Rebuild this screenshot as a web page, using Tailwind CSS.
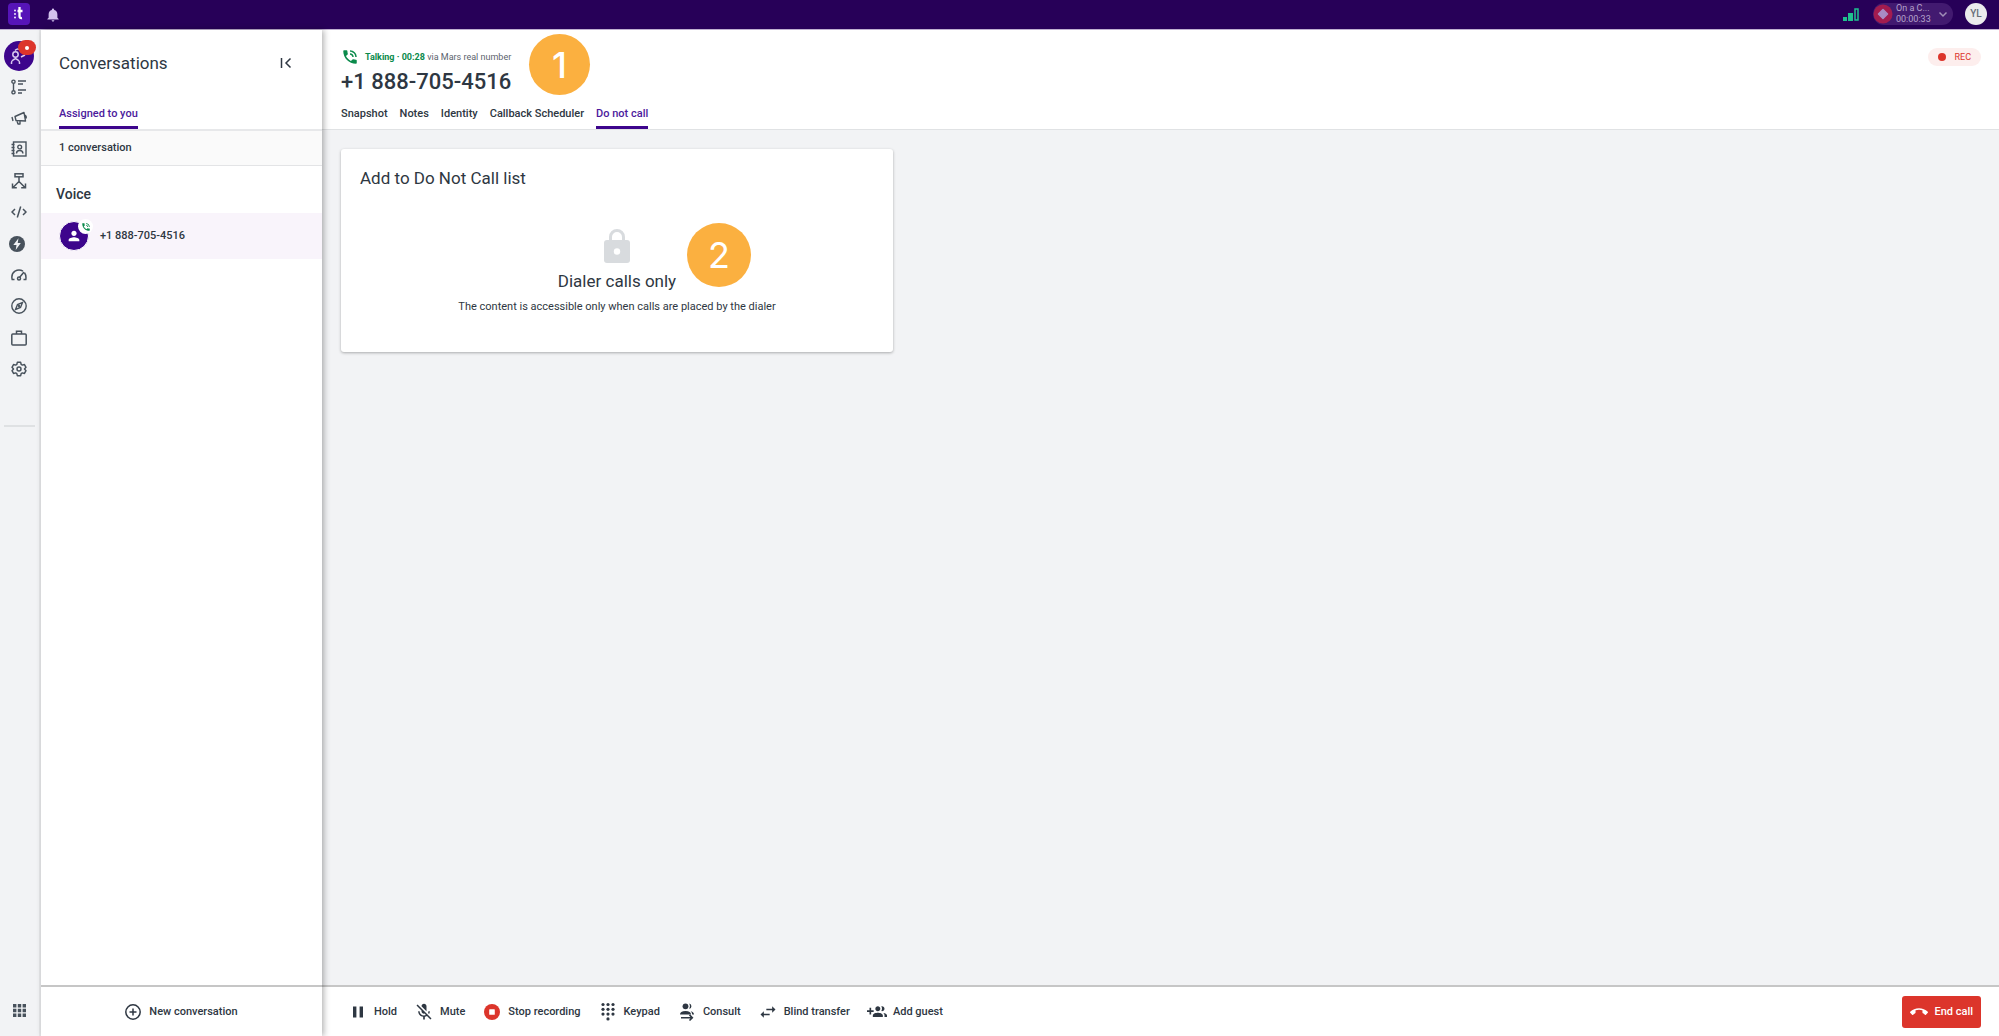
<!DOCTYPE html>
<html lang="en">
<head>
    <meta charset="UTF-8">
    <meta name="viewport" content="width=device-width, initial-scale=1.0">
    <title>Conversations</title>
    <script src="https://cdn.jsdelivr.net/npm/@tailwindcss/browser@4"></script>
</head>
<body class="h-screen flex flex-col overflow-hidden bg-[#f2f3f5] font-[Roboto,sans-serif] text-[11px] leading-4 font-medium text-[#2e3742]">

    <!-- Top bar -->
    <header class="h-[29px] shrink-0 flex items-center justify-between bg-[#270058] pl-2 pr-3">
        <div class="flex items-center gap-4">
            <a href="#" aria-label="Home" class="block size-[22px] mb-0.5">
                <svg viewBox="0 0 22 22" class="size-full">
                    <rect width="22" height="22" rx="4" fill="#5614b8"/>
                    <g fill="#fff"><circle cx="7" cy="7.500" r=".9"/><circle cx="7" cy="11" r=".9"/><circle cx="7" cy="14.500" r=".9"/></g>
                    <path d="M11.500 4v9.300q0 2.200 2.500 1.700M9.500 8h5" fill="none" stroke="#fff" stroke-width="2.300"/>
                </svg>
            </a>
            <button type="button" aria-label="Notifications">
                <svg viewBox="0 0 24 24" class="size-[14px]" fill="#d3c3ec"><path d="M12 23c1.300 0 2.300-1 2.300-2.200H9.700C9.700 22 10.700 23 12 23zm7.500-6.500V11c0-3.700-2-6.700-5.500-7.500V2.800a2 2 0 0 0-4 0v.7C6.500 4.300 4.500 7.300 4.500 11v5.500L2.300 18.700v1h19.400v-1z"/></svg>
            </button>
        </div>
        <div class="flex items-center h-full">
            <svg viewBox="0 0 16 13" class="w-4 h-[13px] mr-[14px]" aria-label="Signal" role="img">
                <path d="M0 9h4v4H0zM5 5h5v8H5z" fill="#1fc08e"/>
                <path d="M12 1h3v11h-3z" fill="none" stroke="#1fc08e" stroke-width="1.500"/>
            </svg>
            <button type="button" class="flex items-center w-20 h-[22px] rounded-full bg-[#421a70] mb-0.5 font-normal text-[#b5a3cc]">
                <svg viewBox="0 0 20 20" class="size-5 shrink-0"><circle cx="10" cy="10" r="9.500" fill="#a31c4f"/><path d="M10 5.500 14.500 10 10 14.500 5.500 10z" fill="#a98bc4" stroke="#a98bc4" stroke-width="1.500" stroke-linejoin="round"/></svg>
                <span class="w-9 ml-[3px] text-left text-[9px] leading-[11px]">On a C...<br>00:00:33</span>
                <svg viewBox="0 0 10 10" class="size-[10px] ml-[6px]" fill="none" stroke="#a08fb8" stroke-width="1.500"><path d="m1.500 3.500 3.500 3.500 3.500-3.500"/></svg>
            </button>
            <button type="button" class="size-[22px] rounded-full bg-[#ebebed] ml-3 mb-0.5 text-[10px] text-[#666e78]">YL</button>
        </div>
    </header>

    <div class="flex flex-1 min-h-0 border-t border-[#bfb0d0]">

        <!-- Navigation rail -->
        <nav class="w-[41px] shrink-0 flex flex-col border-r-2 border-[#e7e8ea] text-[#48525c]">
            <a href="#" aria-label="Conversations" class="relative block size-[30px] mt-[11px] ml-1 rounded-full bg-[#3d058c]">
                <svg viewBox="0 0 30 30" class="size-full" fill="none" stroke="#d9c9ef" stroke-width="1.500"><circle cx="11.500" cy="13.500" r="2.700"/><path d="M7.500 23v-1.500q0-1.500 1.500-2.500l2.500-1.500 2.500 1.500q1.500 1 1.500 2.500V23M11 9.500q3-3 5.500 0M17 16l4-2"/></svg>
                <span class="absolute -top-px left-[14px] w-[18px] h-[15px] rounded-full bg-[#dc352b] flex items-center justify-center"><span class="size-1 rounded-full bg-white"></span></span>
            </a>
            <div class="grid grid-rows-10 h-[314px] justify-items-center items-center pr-[2px]">
                <a href="#" aria-label="Activities"><svg viewBox="0 0 16 16" class="size-4" fill="none" stroke="currentColor" stroke-width="1.400"><circle cx="2.500" cy="2.700" r="1.600"/><circle cx="2.500" cy="13.300" r="1.600"/><path d="M2.500 4.500v7M7 2h8M7 5h5M7 11h8M7 14h4"/></svg></a>
                <a href="#" aria-label="Campaigns"><svg viewBox="0 0 16 16" class="size-4" fill="none" stroke="currentColor" stroke-width="1.400" stroke-linejoin="round"><path d="m4 6.500 9-4 1.500 8.500-9.500-.5zM1 7l1 4M6 11l1 3h2v-2.700M14 5q2 1.500.8 3.500"/></svg></a>
                <a href="#" aria-label="Contacts"><svg viewBox="0 0 16 16" class="size-4" fill="none" stroke="currentColor" stroke-width="1.400"><rect x="2.500" y="1" width="12.500" height="14"/><circle cx="8.700" cy="6" r="1.900"/><path d="M5.500 12.500q0-3 3.200-3t3.200 3M.500 3.500h3M.500 6.500h3M.500 9.500h3M.500 12.500h3"/></svg></a>
                <a href="#" aria-label="Flows"><svg viewBox="0 0 16 16" class="size-4" fill="none" stroke="currentColor" stroke-width="1.500"><rect x="4" y=".800" width="8" height="3"/><path d="M8 4v4.500L2 14.500M8 8.500l6 6M1.500 10.500v4.300h4.300M14.500 10.500v4.300h-4.300"/></svg></a>
                <a href="#" aria-label="Developers"><svg viewBox="0 0 16 16" class="size-4" fill="none" stroke="currentColor" stroke-width="1.500"><path d="M4 5 1 8l3 3M12 5l3 3-3 3M9.700 2.500l-3.400 11"/></svg></a>
                <a href="#" aria-label="Automations" class="pr-1"><svg viewBox="0 0 16 16" class="size-4"><circle cx="8" cy="8" r="8" fill="currentColor"/><path d="M9.500 2.300 4.300 9h3.200l-.8 4.900L11.800 7H8.700z" fill="#f2f3f5"/></svg></a>
                <a href="#" aria-label="Performance"><svg viewBox="0 0 16 16" class="size-4" fill="none" stroke="currentColor" stroke-width="1.500"><path d="M3.500 12.500H1.200Q-.200 7 4 4.200 8 2 12 4.200M13.500 5.800q2 2.700 1.300 6.700h-2.300M8.500 10.500 13 5"/><circle cx="8" cy="11.500" r="1.500"/></svg></a>
                <a href="#" aria-label="Explore"><svg viewBox="0 0 16 16" class="size-4" fill="none" stroke="currentColor" stroke-width="1.400"><circle cx="8" cy="8" r="7.200"/><path d="m11.500 4.500-2 5-5 2 2-5z"/><circle cx="8" cy="8" r=".5"/></svg></a>
                <a href="#" aria-label="Workspace"><svg viewBox="0 0 16 16" class="size-4" fill="none" stroke="currentColor" stroke-width="1.500"><rect x=".800" y="4" width="14.400" height="11" rx="1"/><path d="M5.500 4V1.300h5V4"/></svg></a>
                <a href="#" aria-label="Settings"><svg viewBox="0 0 24 24" class="size-4" fill="none" stroke="currentColor" stroke-width="2.200"><path d="M9.500 2h5l.8 3.200 1.700 1 3.200-.9 2.300 4.200L20.200 12l2.300 2.500-2.300 4.200-3.200-.9-1.700 1-.8 3.200h-5l-.8-3.200-1.700-1-3.200.9-2.300-4.200L3.800 12 1.500 9.500l2.300-4.200 3.200.9 1.700-1z" stroke-linejoin="round"/><circle cx="12" cy="12" r="3"/></svg></a>
            </div>
            <hr class="mx-1 mt-10 border-t-2 border-[#dfe1e3]">
            <button type="button" aria-label="Apps" class="mt-auto mb-[19px] mx-auto">
                <svg viewBox="0 0 13 13" class="size-[13px]" fill="currentColor"><path d="M0 0h3.400v3.400H0zM4.800 0h3.400v3.400H4.800zM9.600 0H13v3.400H9.600zM0 4.800h3.400v3.400H0zM4.800 4.800h3.400v3.400H4.800zM9.600 4.800H13v3.400H9.600zM0 9.600h3.400V13H0zM4.800 9.600h3.400V13H4.800zM9.600 9.600H13V13H9.600z"/></svg>
            </button>
        </nav>

        <!-- Conversations panel -->
        <aside class="relative z-10 w-[281px] shrink-0 flex flex-col bg-white shadow-[2px_0_6px_rgba(0,0,0,0.3)]">
            <div class="flex items-center justify-between pl-[18px] pr-[30px] pt-[21px]">
                <h1 class="text-[17px] leading-6 font-normal">Conversations</h1>
                <button type="button" aria-label="Collapse panel">
                    <svg viewBox="0 0 12 12" class="size-3" fill="none" stroke="currentColor" stroke-width="1.500"><path d="M1.500 1v10M10.500 1.500 6 6l4.500 4.500"/></svg>
                </button>
            </div>
            <div class="flex pl-[18px] pt-[31px] border-b-2 border-[#e7e8ea]">
                <a href="#" class="pb-1 border-b-3 border-[#3d058c] text-[#4c1a9c]">Assigned to you</a>
            </div>
            <p class="h-[35px] flex items-center pl-[18px] bg-[#fafafa] border-b border-[#e3e4e6]">1 conversation</p>
            <h2 class="pl-[15px] pt-[18px] pb-[9px] text-[14px] leading-5">Voice</h2>
            <a href="#" class="flex items-center gap-[11px] h-[46px] pl-[18px] bg-[#f9f4fb]">
                <span class="relative size-[30px] rounded-full bg-[#3d058c] border border-white">
                    <svg viewBox="0 0 24 24" class="absolute left-[6px] top-[6px] size-4" fill="#fff"><path d="M12 12c2.210 0 4-1.790 4-4s-1.790-4-4-4-4 1.790-4 4 1.790 4 4 4zm0 2c-2.670 0-8 1.340-8 4v2h16v-2c0-2.660-5.330-4-8-4z"/></svg>
                    <span class="absolute -top-[3px] -right-[5px] size-[15px] rounded-full bg-white flex items-center justify-center">
                        <svg viewBox="0 0 24 24" class="size-[10px]" fill="#0a8a4b"><path d="M20 15.500c-1.250 0-2.450-.2-3.570-.57-.35-.11-.74-.03-1.020.24l-2.200 2.200c-2.830-1.440-5.150-3.750-6.590-6.590l2.200-2.210c.28-.26.36-.65.25-1C8.700 6.450 8.500 5.250 8.500 4c0-.55-.45-1-1-1H4c-.55 0-1 .45-1 1 0 9.390 7.610 17 17 17 .55 0 1-.45 1-1v-3.500c0-.55-.45-1-1-1zM19 12h2c0-4.970-4.030-9-9-9v2c3.870 0 7 3.130 7 7zm-4 0h2c0-2.760-2.240-5-5-5v2c1.660 0 3 1.340 3 3z"/></svg>
                    </span>
                </span>
                +1 888-705-4516
            </a>
            <div class="mt-auto h-[51px] flex items-center justify-center border-t-2 border-[#c6c6c6]">
                <button type="button" class="flex items-center gap-2">
                    <svg viewBox="0 0 16 16" class="size-4" fill="none" stroke="currentColor" stroke-width="1.500"><circle cx="8" cy="8" r="7.200"/><path d="M8 4.500v7M4.500 8h7"/></svg>
                    New conversation
                </button>
            </div>
        </aside>

        <!-- Call area -->
        <main class="flex-1 min-w-0 flex flex-col">
            <div class="relative flex justify-between bg-white border-b border-[#e0e2e4] pl-[19px] pr-[18px]">
                <div>
                    <div class="flex items-center gap-2 pt-[18px] text-[9px]">
                        <svg viewBox="0 0 24 24" class="size-[18px] -mr-0.5" fill="#0a8a4b"><path d="M20 15.500c-1.250 0-2.450-.2-3.570-.57-.35-.11-.74-.03-1.020.24l-2.200 2.200c-2.830-1.440-5.150-3.750-6.590-6.590l2.200-2.210c.28-.26.36-.65.25-1C8.700 6.450 8.500 5.250 8.500 4c0-.55-.45-1-1-1H4c-.55 0-1 .45-1 1 0 9.390 7.610 17 17 17 .55 0 1-.45 1-1v-3.500c0-.55-.45-1-1-1zM19 12h2c0-4.970-4.030-9-9-9v2c3.870 0 7 3.130 7 7zm-4 0h2c0-2.760-2.240-5-5-5v2c1.660 0 3 1.340 3 3z"/></svg>
                        <p><span class="font-bold text-[#0a8a4b]">Talking · 00:28</span> <span class="font-normal text-[#5b636d]">via Mars real number</span></p>
                    </div>
                    <h2 class="pt-0.5 text-[22px] leading-7">+1 888-705-4516</h2>
                    <nav class="flex gap-3 pt-[10px]">
                        <a href="#" class="pb-1">Snapshot</a>
                        <a href="#" class="pb-1">Notes</a>
                        <a href="#" class="pb-1">Identity</a>
                        <a href="#" class="pb-1">Callback Scheduler</a>
                        <a href="#" class="pb-1 border-b-3 border-[#3d058c] text-[#4c1a9c]">Do not call</a>
                    </nav>
                </div>
                <span class="flex items-center gap-2 h-[18px] mt-[18px] px-[10px] rounded-full bg-[#fdeeed] text-[9px] font-normal text-[#dc352b]"><span class="size-2 rounded-full bg-[#dc352b]"></span>REC</span>
                <span class="absolute left-[207px] top-1 size-[61px] rounded-full bg-[#fbb040] flex items-center justify-center font-[Inter,sans-serif] text-[36px] text-white">1</span>
            </div>

            <div class="flex-1 min-h-0 p-[19px]">
                <section class="relative w-[552px] h-[203px] bg-white rounded-[3px] shadow-[0_1px_3px_rgba(0,0,0,0.3)] px-[19px] pt-[17px] font-normal">
                    <h3 class="text-[17px] leading-6">Add to Do Not Call list</h3>
                    <div class="flex flex-col items-center pt-[39px]">
                        <svg viewBox="0 0 26 34" class="w-[26px] h-[34px]"><path d="M6.500 13V8a6.500 6.500 0 0 1 13 0v5" fill="none" stroke="#d8dbde" stroke-width="3"/><path d="M3 11h20a3 3 0 0 1 3 3v17a3 3 0 0 1-3 3H3a3 3 0 0 1-3-3V14a3 3 0 0 1 3-3z" fill="#d8dbde"/><circle cx="13" cy="22.500" r="3.200" fill="#fff"/></svg>
                        <h4 class="mt-[6px] text-[17px] leading-6">Dialer calls only</h4>
                        <p class="mt-1.5">The content is accessible only when calls are placed by the dialer</p>
                    </div>
                    <span class="absolute left-[346px] top-[74px] size-16 rounded-full bg-[#fbb040] flex items-center justify-center font-[Inter,sans-serif] text-[36px] text-white">2</span>
                </section>
            </div>

            <!-- Call controls -->
            <footer class="h-[51px] shrink-0 flex items-center justify-between bg-white border-t-2 border-[#c6c6c6] pl-[26px] pr-[18px]">
                <div class="flex items-center gap-[17px]">
                    <button type="button" class="flex items-center gap-1.5"><svg viewBox="0 0 20 20" class="size-5" fill="currentColor"><path d="M5 4.500h3.400v11H5zM11.600 4.500H15v11h-3.400z"/></svg>Hold</button>
                    <button type="button" class="flex items-center gap-1.5"><svg viewBox="0 0 24 24" class="size-5" fill="currentColor"><path d="M19 11h-1.700c0 .74-.16 1.430-.43 2.050l1.230 1.230c.56-.98.9-2.090.9-3.280zm-4.020.17c0-.06.02-.11.02-.17V5c0-1.660-1.340-3-3-3S9 3.340 9 5v.18l5.980 5.990zM4.270 3L3 4.270l6.010 6.010V11c0 1.660 1.330 3 2.990 3 .22 0 .44-.03.65-.08l1.660 1.660c-.71.33-1.500.52-2.310.52-2.760 0-5.300-2.100-5.300-5.100H5c0 3.410 2.720 6.230 6 6.720V21h2v-3.280c.91-.13 1.770-.45 2.540-.9L19.730 21 21 19.730 4.270 3z"/></svg>Mute</button>
                    <button type="button" class="flex items-center gap-1.5"><svg viewBox="0 0 20 20" class="size-5"><circle cx="10" cy="10" r="8" fill="#dc352b"/><rect x="7.200" y="7.200" width="5.600" height="5.600" rx=".6" fill="#fff"/></svg>Stop recording</button>
                    <button type="button" class="flex items-center gap-1.5"><svg viewBox="0 0 20 20" class="size-5" fill="currentColor"><circle cx="5" cy="2.500" r="1.600"/><circle cx="10" cy="2.500" r="1.600"/><circle cx="15" cy="2.500" r="1.600"/><circle cx="5" cy="7.300" r="1.600"/><circle cx="10" cy="7.300" r="1.600"/><circle cx="15" cy="7.300" r="1.600"/><circle cx="5" cy="12.100" r="1.600"/><circle cx="10" cy="12.100" r="1.600"/><circle cx="15" cy="12.100" r="1.600"/><circle cx="10" cy="16.900" r="1.600"/></svg>Keypad</button>
                    <button type="button" class="flex items-center gap-1.5"><svg viewBox="0 0 20 20" class="size-5" fill="currentColor"><circle cx="8.500" cy="4.300" r="2.900"/><path d="M12.300 1.500a2.900 2.900 0 0 1 0 5.600q1.500-2.800 0-5.600zM3 12.500q0-3.500 5.500-3.500t5.500 3.500zM13.700 9.200q3.300.8 3.300 3.300h-1.800q0-2-1.500-3.300z"/><path d="M4 15.700h11M12.500 12.900l2.800 2.800-2.800 2.800" fill="none" stroke="currentColor" stroke-width="1.600"/></svg>Consult</button>
                    <button type="button" class="flex items-center gap-1.5"><svg viewBox="0 0 24 24" class="size-5" fill="currentColor"><path d="M6.990 11L3 15l3.990 4v-3H14v-2H6.990v-3zM21 9l-3.990-4v3H10v2h7.010v3L21 9z"/></svg>Blind transfer</button>
                    <button type="button" class="flex items-center gap-1.5"><svg viewBox="0 0 24 24" class="size-5" fill="currentColor"><path d="M8 10H5V7H3v3H0v2h3v3h2v-3h3v-2zm10 1c1.660 0 2.990-1.340 2.990-3S19.660 5 18 5c-.32 0-.63.05-.91.14.57.81.9 1.790.9 2.860s-.34 2.040-.9 2.860c.28.09.59.14.91.14zm-5 0c1.660 0 2.990-1.340 2.990-3S14.660 5 13 5c-1.660 0-3 1.340-3 3s1.340 3 3 3zm6.620 2.160c.83.73 1.380 1.660 1.380 2.840v2h3v-2c0-1.540-2.370-2.490-4.380-2.840zM13 13c-2 0-6 1-6 3v2h12v-2c0-2-4-3-6-3z"/></svg>Add guest</button>
                </div>
                <button type="button" class="flex items-center gap-1.5 h-8 px-2 rounded-[3px] bg-[#dc352b] text-white"><svg viewBox="0 0 24 24" class="size-[18px]" fill="currentColor"><path d="M12 9c-1.600 0-3.150.25-4.600.72v3.100c0 .39-.23.74-.56.9-.98.49-1.870 1.120-2.660 1.850-.18.18-.43.28-.7.28-.28 0-.53-.11-.71-.29L.29 13.080c-.18-.17-.29-.42-.29-.7 0-.28.11-.53.29-.71C3.340 8.780 7.460 7 12 7s8.660 1.780 11.710 4.670c.18.18.29.43.29.71 0 .28-.11.53-.29.71l-2.480 2.480c-.18.18-.43.29-.71.29-.27 0-.52-.11-.7-.28-.79-.74-1.690-1.360-2.670-1.850-.33-.16-.56-.5-.56-.9v-3.100C15.150 9.250 13.600 9 12 9z"/></svg>End call</button>
            </footer>
        </main>
    </div>
</body>
</html>
